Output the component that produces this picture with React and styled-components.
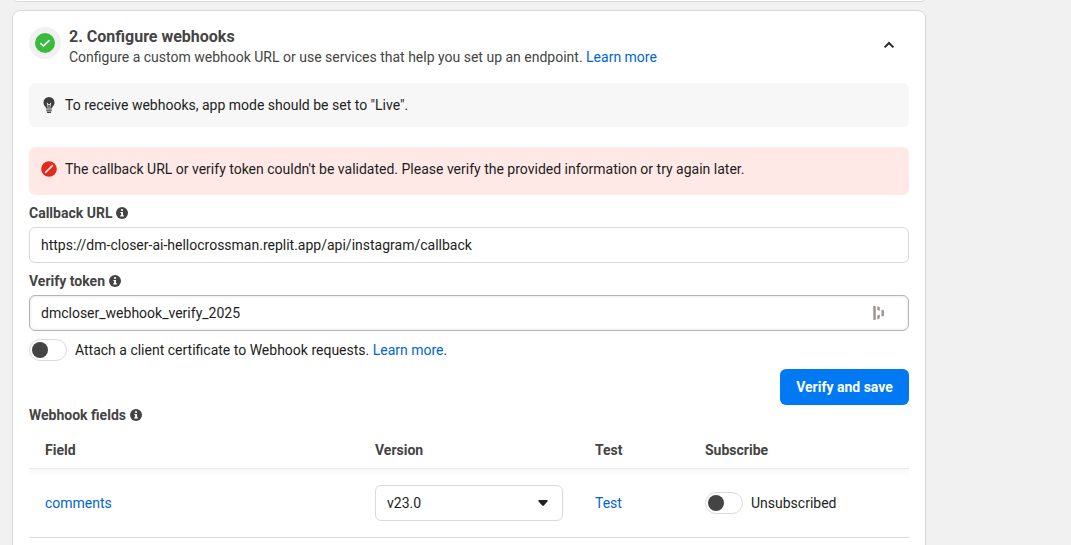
import React from "react";
import styled, { createGlobalStyle } from "styled-components";

const GlobalStyle = createGlobalStyle`
  * { box-sizing: border-box; }
  html, body { margin: 0; padding: 0; height: 100%; overflow: hidden; background: #f1f1f1; }
  body { font: 400 14px/20px Roboto, "Liberation Sans", sans-serif; color: #1c1e21; }
`;

const Page = styled.main`
  height: 545px;
  padding-left: 12px;
  overflow: hidden;
`;
const Card = styled.section`
  width: 914px;
  border: 1px solid #d8d9d9;
  border-radius: 8px;
  background: #fff;
`;
const PreviousCard = styled(Card)`
  height: 10px;
  margin-top: -8px;
`;
const StepCard = styled(Card)`
  height: 600px;
  margin-top: 8px;
  padding: 16px;
`;
const Header = styled.header`
  display: flex;
  align-items: flex-start;
  height: 56px;
`;
const StatusBadge = styled.div`
  display: flex;
  align-items: center;
  justify-content: center;
  width: 32px;
  height: 32px;
  margin-right: 8px;
  border-radius: 50%;
  background: #f1f1f1;
`;
const Heading = styled.div`
  flex: 1;
`;
const Title = styled.h2`
  margin: 0;
  font-size: 16px;
  line-height: 20px;
  font-weight: 700;
  color: #444;
`;
const Subtitle = styled.p`
  margin: 0;
  line-height: 20px;
  color: #444;
`;
const Link = styled.a`
  color: #0064d1;
  text-decoration: none;
`;
const Collapse = styled.button`
  display: flex;
  align-items: center;
  justify-content: center;
  width: 40px;
  height: 36px;
  padding: 0;
  border: 0;
  background: none;
`;
const Notice = styled.div`
  display: flex;
  align-items: flex-start;
  gap: 8px;
  height: ${(p) => (p.$error ? 48 : 44)}px;
  padding: 12px;
  margin-bottom: ${(p) => (p.$error ? 8 : 20)}px;
  border-radius: 6px;
  background: ${(p) => (p.$error ? "#ffe9e7" : "#f7f7f7")};

  svg { margin: 2px 0; }
`;
const Label = styled.div`
  display: flex;
  align-items: center;
  gap: 4px;
  height: 20px;
  font-weight: 700;
  color: #444;
`;
const Input = styled.div`
  display: flex;
  align-items: center;
  justify-content: space-between;
  height: 36px;
  margin: 4px 0 8px;
  padding: 0 23px 0 11px;
  border: 1px solid ${(p) => (p.$active ? "#b4b4b4" : "#dadada")};
  border-radius: 6px;
  box-shadow: ${(p) => (p.$active ? "inset 0 0 3px rgba(0,0,0,0.14)" : "none")};
`;
const SwitchRow = styled.div`
  display: flex;
  align-items: center;
  gap: 8px;
  height: 22px;
`;
const Switch = styled.span`
  display: flex;
  align-items: center;
  width: 38px;
  height: 22px;
  padding-left: 2px;
  border: 1px solid #dadada;
  border-radius: 11px;
  background: #fff;

  &::before {
    content: "";
    width: 16px;
    height: 16px;
    border-radius: 50%;
    background: #444;
  }
`;
const Actions = styled.div`
  display: flex;
  justify-content: flex-end;
  margin-top: 8px;
`;
const PrimaryButton = styled.button`
  width: 129px;
  height: 36px;
  padding: 0;
  border: 0;
  border-radius: 6px;
  background: #0079f2;
  color: #fff;
  font: inherit;
  font-weight: 700;
`;
const TableRow = styled.div`
  display: grid;
  grid-template-columns: 330px 220px 110px 1fr;
  align-items: center;
  height: 69px;
  padding-left: 16px;
  border-bottom: 1px solid #dadada;
`;
const TableHead = styled(TableRow)`
  position: relative;
  height: 44px;
  padding-top: 7px;
  border-bottom: 1px solid #ebebeb;
  font-weight: 700;
  color: #444;

  &::after {
    content: "";
    position: absolute;
    top: 100%;
    left: 0;
    right: 0;
    height: 8px;
    margin-top: 1px;
    background: linear-gradient(#f8f8f8, #fff);
  }
`;
const Select = styled.div`
  display: flex;
  align-items: center;
  justify-content: space-between;
  width: 188px;
  height: 36px;
  padding: 0 14px 0 11px;
  border: 1px solid #dadada;
  border-radius: 6px;
`;

const CheckIcon = () => (
  <svg width="20" height="20" viewBox="0 0 20 20">
    <circle cx="10" cy="10" r="10" fill="#3cb93f" />
    <path d="M5.900 10.600l2.500 2.400 5.600-5.300" fill="none" stroke="#fff" strokeWidth="1.700" strokeLinecap="round" strokeLinejoin="round" />
  </svg>
);
const ChevronIcon = () => (
  <svg width="12" height="8" viewBox="0 0 12 8">
    <path d="M1.600 6.400L6 2l4.400 4.400" fill="none" stroke="#2b2b2b" strokeWidth="2" />
  </svg>
);
const BulbIcon = () => (
  <svg width="16" height="16" viewBox="0 0 16 16">
    <path d="M8 0a5.500 5.500 0 0 0-5.500 5.500c0 2.200 1.100 3.200 1.900 4.300.4.500.6 1 .7 1.800h5.800c.1-.8.3-1.300.7-1.800.8-1.100 1.900-2.100 1.900-4.300A5.500 5.500 0 0 0 8 0z" fill="#3d3d3d" />
    <path d="M6.300 5.800l.8 5M9.700 5.800l-.8 5M6.300 6.400L8 8l1.700-1.600" fill="none" stroke="#f7f7f7" strokeWidth=".8" />
    <path d="M5.200 12.500h5.600v1.200H5.200zM5.500 14.500h5l-.8 1.400H6.300z" fill="#3d3d3d" />
  </svg>
);
const ErrorIcon = () => (
  <svg width="16" height="16" viewBox="0 0 16 16">
    <circle cx="8" cy="8" r="7.800" fill="#e02b1d" />
    <path d="M4.600 11.400l6.800-6.800" stroke="#ffe9e7" strokeWidth="1.500" strokeLinecap="round" />
  </svg>
);
const InfoIcon = () => (
  <svg width="12" height="12" viewBox="0 0 12 12">
    <circle cx="6" cy="6" r="6" fill="#444" />
    <circle cx="6" cy="3" r="1.100" fill="#fff" />
    <path d="M4.400 4.900h2.600v3.400h.9v1.200H4.200V8.300h.9V6.100h-.7z" fill="#fff" />
  </svg>
);
const PasswordManagerIcon = () => (
  <svg width="12" height="16" viewBox="0 0 12 16">
    <path d="M1.500 .8l1.300.8v12.800l-2.500.9V.8zM4.300 1.300l2.500.9v3.600l-2.500-.9zM4.300 10.400l2.500-.9v3.700l-2.500 1.300zM8.500 4.500l2.500 1v5.300l-2.500 1z" fill="#9b9693" />
  </svg>
);
const CaretIcon = () => (
  <svg width="10" height="6" viewBox="0 0 10 6">
    <path d="M1.300 0h7.400c1 0 1.400.9.7 1.600L5.900 5.400c-.5.6-1.300.6-1.800 0L.6 1.600C-.1.900.3 0 1.300 0z" fill="#222" />
  </svg>
);

export default function App() {
  return (
    <>
      <GlobalStyle />
      <Page>
        <PreviousCard />
        <StepCard>
          <Header>
            <StatusBadge><CheckIcon /></StatusBadge>
            <Heading>
              <Title>2. Configure webhooks</Title>
              <Subtitle>
                Configure a custom webhook URL or use services that help you set up an endpoint. <Link>Learn more</Link>
              </Subtitle>
            </Heading>
            <Collapse aria-label="Collapse"><ChevronIcon /></Collapse>
          </Header>
          <Notice>
            <BulbIcon />
            <span>To receive webhooks, app mode should be set to "Live".</span>
          </Notice>
          <Notice $error>
            <ErrorIcon />
            <span>The callback URL or verify token couldn't be validated. Please verify the provided information or try again later.</span>
          </Notice>
          <Label>Callback URL <InfoIcon /></Label>
          <Input>https://dm-closer-ai-hellocrossman.replit.app/api/instagram/callback</Input>
          <Label>Verify token <InfoIcon /></Label>
          <Input $active>dmcloser_webhook_verify_2025 <PasswordManagerIcon /></Input>
          <SwitchRow>
            <Switch />
            <span>Attach a client certificate to Webhook requests. <Link>Learn more</Link>.</span>
          </SwitchRow>
          <Actions><PrimaryButton>Verify and save</PrimaryButton></Actions>
          <Label>Webhook fields <InfoIcon /></Label>
          <TableHead>
            <span>Field</span>
            <span>Version</span>
            <span>Test</span>
            <span>Subscribe</span>
          </TableHead>
          <TableRow>
            <Link>comments</Link>
            <Select>v23.0 <CaretIcon /></Select>
            <Link>Test</Link>
            <SwitchRow><Switch />Unsubscribed</SwitchRow>
          </TableRow>
        </StepCard>
      </Page>
    </>
  );
}
